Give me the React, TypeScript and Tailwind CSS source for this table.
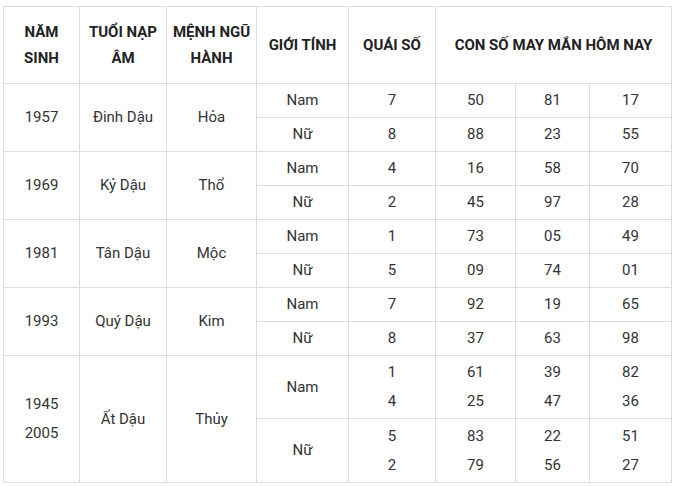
import React from 'react';

type Row = { gender: string; quai: string[]; nums: string[][] };
type Group = { years: string[]; tuoi: string; menh: string; rows: Row[]; tall?: boolean };

const groups: Group[] = [
  {
    years: ['1957'], tuoi: 'Đinh Dậu', menh: 'Hỏa',
    rows: [
      { gender: 'Nam', quai: ['7'], nums: [['50'], ['81'], ['17']] },
      { gender: 'Nữ', quai: ['8'], nums: [['88'], ['23'], ['55']] },
    ],
  },
  {
    years: ['1969'], tuoi: 'Kỷ Dậu', menh: 'Thổ',
    rows: [
      { gender: 'Nam', quai: ['4'], nums: [['16'], ['58'], ['70']] },
      { gender: 'Nữ', quai: ['2'], nums: [['45'], ['97'], ['28']] },
    ],
  },
  {
    years: ['1981'], tuoi: 'Tân Dậu', menh: 'Mộc',
    rows: [
      { gender: 'Nam', quai: ['1'], nums: [['73'], ['05'], ['49']] },
      { gender: 'Nữ', quai: ['5'], nums: [['09'], ['74'], ['01']] },
    ],
  },
  {
    years: ['1993'], tuoi: 'Quý Dậu', menh: 'Kim',
    rows: [
      { gender: 'Nam', quai: ['7'], nums: [['92'], ['19'], ['65']] },
      { gender: 'Nữ', quai: ['8'], nums: [['37'], ['63'], ['98']] },
    ],
  },
  {
    years: ['1945', '2005'], tuoi: 'Ất Dậu', menh: 'Thủy', tall: true,
    rows: [
      { gender: 'Nam', quai: ['1', '4'], nums: [['61', '25'], ['39', '47'], ['82', '36']] },
      { gender: 'Nữ', quai: ['5', '2'], nums: [['83', '79'], ['22', '56'], ['51', '27']] },
    ],
  },
];

const cell = 'border border-[#dddddd] text-center align-middle p-0';

const Lines = ({ items }: { items: string[] }) => (
  <>
    {items.map((t, i) => (
      <div key={i} className="leading-[29px]">{t}</div>
    ))}
  </>
);

export default function App() {
  return (
    <div className="bg-white w-[676px] h-[486px] pt-[6px] pl-[3px]" style={{ fontFamily: 'Roboto, "Noto Sans", sans-serif' }}>
      <table className="border-collapse table-fixed w-[669px] text-[15px] text-[#333333]">
        <colgroup>
          <col className="w-[76px]" />
          <col className="w-[87px]" />
          <col className="w-[90px]" />
          <col className="w-[92px]" />
          <col className="w-[87px]" />
          <col className="w-[80px]" />
          <col className="w-[74px]" />
          <col className="w-[82px]" />
        </colgroup>
        <thead>
          <tr className="h-[77px] font-bold text-[#222222] leading-[26px]">
            <th className={cell + ' font-bold'}>NĂM<br />SINH</th>
            <th className={cell + ' font-bold'}>TUỔI NẠP<br />ÂM</th>
            <th className={cell + ' font-bold'}>MỆNH NGŨ<br />HÀNH</th>
            <th className={cell + ' font-bold'}>GIỚI TÍNH</th>
            <th className={cell + ' font-bold'}>QUÁI SỐ</th>
            <th className={cell + ' font-bold'} colSpan={3}>CON SỐ MAY MẮN HÔM NAY</th>
          </tr>
        </thead>
        <tbody>
          {groups.map((g) =>
            g.rows.map((r, i) => (
              <tr key={g.tuoi + i} className={g.tall ? (i === 0 ? 'h-[63px]' : 'h-[64px]') : 'h-[34px]'}>
                {i === 0 && (
                  <>
                    <td className={cell} rowSpan={2}><Lines items={g.years} /></td>
                    <td className={cell} rowSpan={2}>{g.tuoi}</td>
                    <td className={cell} rowSpan={2}>{g.menh}</td>
                  </>
                )}
                <td className={cell}>{r.gender}</td>
                <td className={cell}><Lines items={r.quai} /></td>
                {r.nums.map((n, j) => (
                  <td key={j} className={cell}><Lines items={n} /></td>
                ))}
              </tr>
            ))
          )}
        </tbody>
      </table>
    </div>
  );
}
